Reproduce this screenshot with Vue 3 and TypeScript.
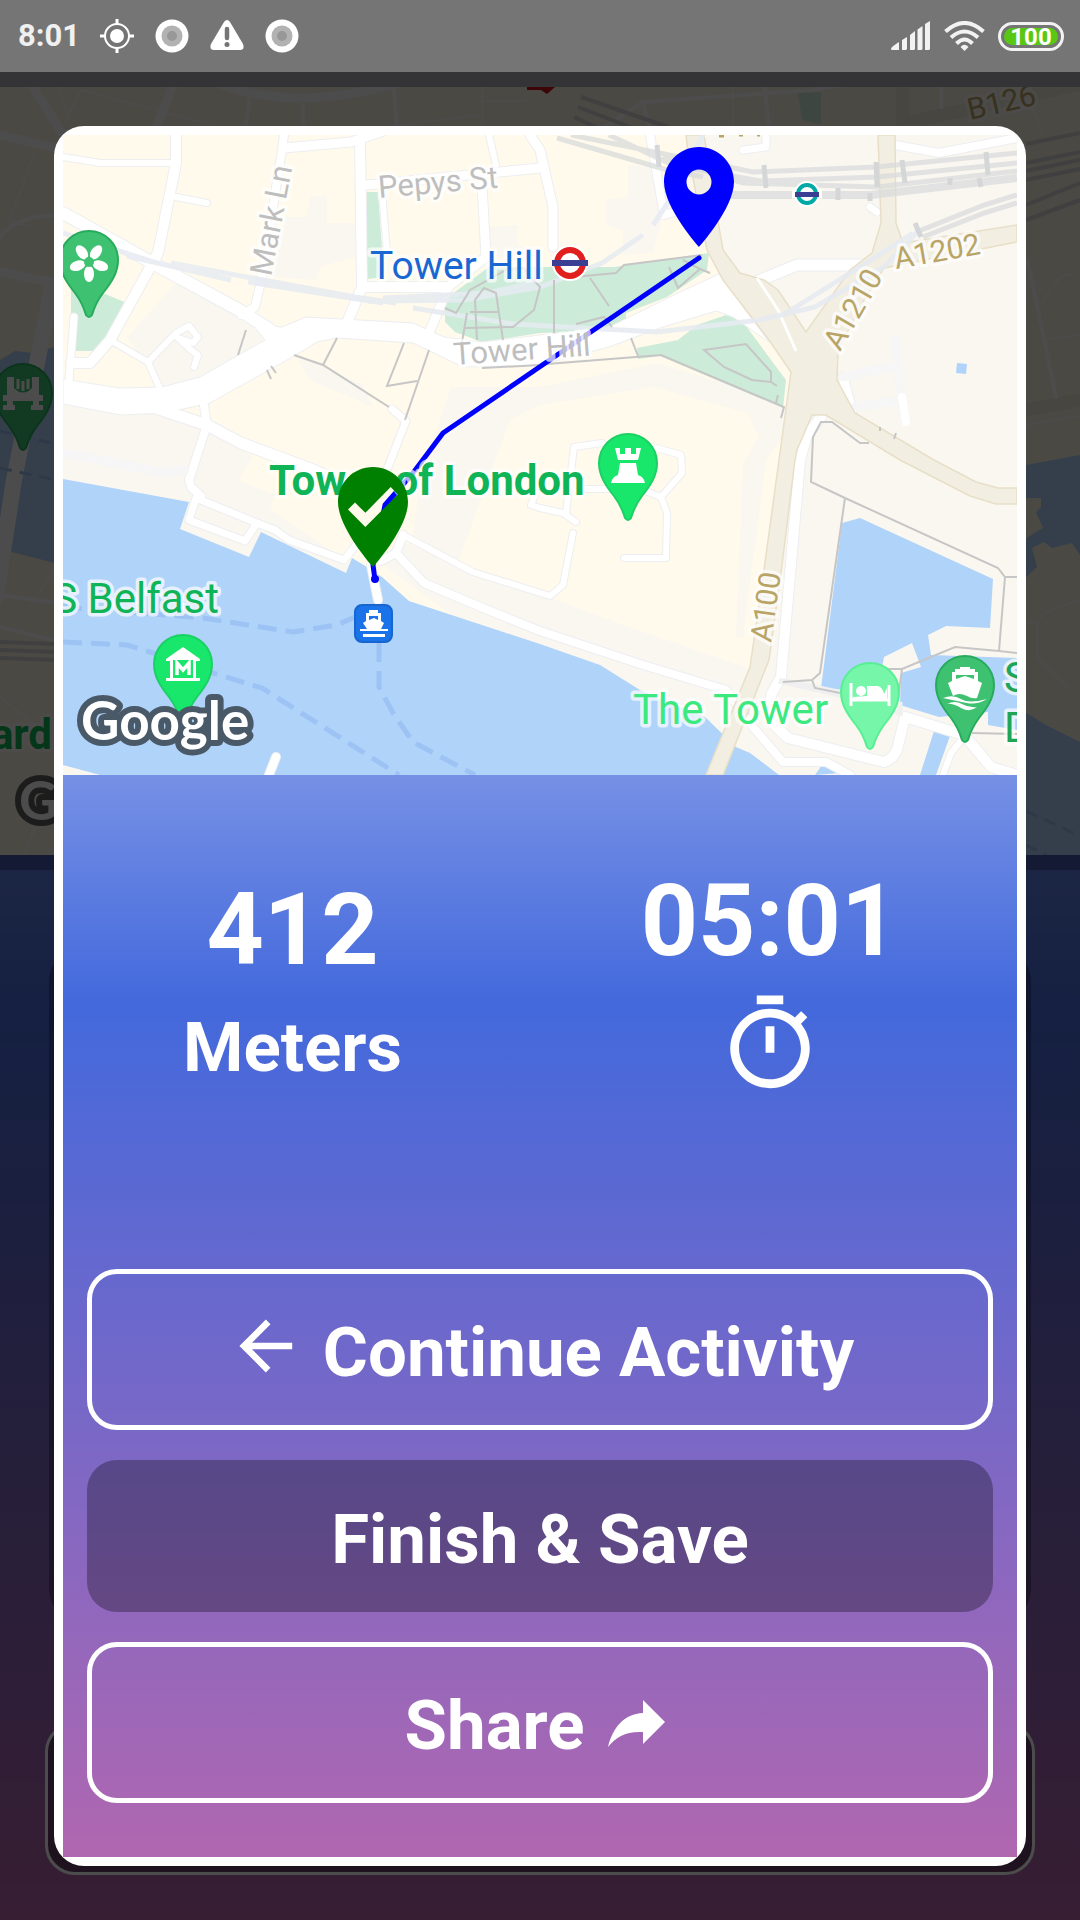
<script setup lang="ts">
import { ref } from 'vue'

interface PoiPin {
  id: string
  x: number
  y: number
  fill: string
  edge: string
}

const clock = ref('8:01')
const battery = ref(100)
const distance = ref(412)
const elapsed = ref('05:01')

const pinShape =
  'M-29 0A29 29 0 0 1 29 0C29 13 22 23 14 33C8 41 5 48 3 55Q0 59 -3 55C-5 48 -8 41 -14 33C-22 23 -29 13 -29 0Z'

const pins: PoiPin[] = [
  { id: 'garden', x: 26, y: 125, fill: '#3fc172', edge: '#27ac5d' },
  { id: 'castle', x: 565, y: 328, fill: '#19e76b', edge: '#1bd065' },
  { id: 'museum', x: 120, y: 529, fill: '#19e76b', edge: '#1bd065' },
  { id: 'hotel', x: 807, y: 557, fill: '#75f6a8', edge: '#58ef94' },
  { id: 'marina', x: 902, y: 550, fill: '#3fc172', edge: '#27ac5d' },
]

const footpaths: string[] = [
  'M183 195L175 220', 'M274 203L260 230', 'M231 220L260 230L326 272', 'M341 208L324 251L354 246',
  'M366 215L342 285', 'M204 235L208 244M208 231L213 238',
  'M382 173L393 178L407 155L443 135L460 133L477 152L471 175L450 192L402 193',
  'M414 205L412 165L421 153L433 158L440 205', 'M407 177L436 177', 'M399 207L404 178',
  'M511 142L553 138L561 130L639 120', 'M527 143L546 171', 'M491 145L491 198',
  'M606 132L615 153L637 134L620 125M637 134L647 138', 'M513 189L541 182L549 192',
  'M419 233L477 230L484 229L598 220L721 272L718 283', 'M568 203L575 221',
  'M641 215L683 209L708 237L708 247L689 245L661 232Z', 'M708 247L714 251M715 260L713 268',
  'M806 308L797 308L769 287L758 287L750 302L748 347L782 363L935 433L942 442H954',
  'M942 442L936 516', 'M782 363L757 538L749 545L720 547', 'M749 545L752 553L777 558',
  'M825 534H839L892 512L936 516L954 518', 'M839 534L836 556', 'M909 598L954 599',
  'M817 292V296M833 298L831 304',
]

const streets: { d: string; w: number }[] = [
  { d: 'M113 0V28L95 118L47 205L27 228H8', w: 10 },
  { d: 'M0 22L37 28H113', w: 6 },
  { d: 'M113 62L144 68', w: 6 },
  { d: 'M0 78L95 131L178 176L215 200', w: 12 },
  { d: 'M221 0L219 15L199 142L192 172L178 180', w: 8 },
  { d: 'M221 13L288 7L318 -3', w: 9 },
  { d: 'M297 5L299 152L283 190', w: 10 },
  { d: 'M299 152H385', w: 10 },
  { d: 'M299 50L304 50L477 33', w: 9 },
  { d: 'M419 50L423 122L385 152L366 198', w: 9 },
  { d: 'M319 57L324 118', w: 6 },
  { d: 'M426 0L433 30', w: 6 },
  { d: 'M467 0L477 15L490 72V112', w: 9 },
  { d: 'M587 0L601 80L615 76', w: 8 },
  { d: 'M47 205L85 227L97 254', w: 6 },
  { d: 'M85 227L113 198L126 191L135 202L130 208L115 203L128 215L135 220L131 232', w: 6 },
  { d: 'M11 182L6 246', w: 7 },
  { d: 'M140 264L144 290L126 345L128 352L138 361', w: 8 },
  { d: 'M90 272L144 290L178 308L250 335L280 348', w: 11 },
  { d: 'M329 274L343 286L320 345', w: 7 },
  { d: 'M133 363L126 385L182 406L194 388ZL194 388L212 395L226 405L281 425L297 405', w: 7 },
  { d: 'M340 400L410 437L487 461L500 450L510 398', w: 6 },
  { d: 'M308 430L315 465M318 426L333 418L340 400M333 418L361 448L420 473L477 496L580 530L663 555L690 592L720 627H763L787 640', w: 8 },
  { d: 'M503 378L511 312L539 308', w: 6 },
  { d: 'M590 312L618 320L619 338L598 362L604 378L603 423H561', w: 6 },
  { d: 'M522 354H560L580 355L598 362M477 373L500 378L513 387', w: 6 },
  { d: 'M477 348L468 370L477 373', w: 6 },
  { d: 'M758 282L744 300L737 325L718 542L708 560L706 585L725 603L821 627Q830 624 834 615L842 582L901 600L928 632L954 640', w: 10 },
  { d: 'M901 602L888 618L880 640', w: 6 },
  { d: 'M780 242L789 276', w: 9 },
  { d: 'M832 10L876 18L954 3', w: 8 },
  { d: 'M695 146L734 130H800', w: 11 },
  { d: 'M680 15L703 12V0', w: 7 },
  { d: 'M807 72L814 77', w: 7 },
  { d: 'M213 622L204 645', w: 8 },
]
</script>

<template>
  <div class="screen">
    <header class="status">
      <time class="clock">{{ clock }}</time>
      <div class="notices">
        <svg width="34" height="34" viewBox="0 0 34 34" aria-hidden="true">
          <g stroke="#fff" fill="none" stroke-width="2">
            <circle cx="17" cy="17" r="12" />
            <path d="M17 0V5M17 29V34M0 17H5M29 17H34" stroke-width="3" />
          </g>
          <circle cx="17" cy="17" r="7" fill="#fff" />
        </svg>
        <svg width="34" height="34" viewBox="0 0 34 34" aria-hidden="true">
          <circle cx="17" cy="17" r="16.500" fill="#fff" />
          <circle cx="17" cy="17" r="10.500" fill="#b2b2b2" />
          <circle cx="17" cy="17" r="5" fill="#989898" />
        </svg>
        <svg width="34" height="34" viewBox="0 0 34 34" aria-hidden="true">
          <path d="M14 3Q17 -1 20 3L33 25Q35 31 30 31H4Q-1 31 1 25Z" fill="#fff" />
          <path d="M17 10V19" stroke="#757575" stroke-width="4.500" stroke-linecap="round" />
          <circle cx="17" cy="25.500" r="2.500" fill="#757575" />
        </svg>
        <svg width="34" height="34" viewBox="0 0 34 34" aria-hidden="true">
          <circle cx="17" cy="17" r="16.500" fill="#fff" />
          <circle cx="17" cy="17" r="10.500" fill="#b2b2b2" />
          <circle cx="17" cy="17" r="5" fill="#989898" />
        </svg>
      </div>
      <div class="system">
        <svg width="40" height="30" viewBox="0 0 40 30" fill="#f2f2f2" aria-hidden="true">
          <path d="M0 28Q0 26 8 21V29H1Q0 29 0 28ZM11 19L16 16V28L15 29H11ZM19 14L24 10V28L23 29H19ZM26.500 8.500L31.500 5V28L30.500 29H26.500ZM34 3L39 0V28L38 29H34Z" />
        </svg>
        <svg width="41" height="30" viewBox="0 0 41 30" fill="none" stroke="#f2f2f2" stroke-width="4" aria-hidden="true">
          <path d="M1.500 10.500Q20.500 -6.500 39.500 10.500" />
          <path d="M7 16.500Q20.500 4.500 34 16.500" />
          <path d="M12.500 22.500Q20.500 14.500 28.500 22.500" />
          <path d="M16.500 26Q20.500 21.500 24.500 26L20.500 30Z" fill="#f2f2f2" stroke="none" />
        </svg>
        <div class="battery"><span class="charge">{{ battery }}</span></div>
      </div>
    </header>

    <div class="stage">
      <div class="tracker" aria-hidden="true">
        <div class="tracker-bar"></div>
        <svg class="tracker-map" viewBox="0 0 1080 768" preserveAspectRatio="xMidYMid slice">
          <rect width="1080" height="768" fill="#f9f3e4" />
          <path d="M0 273L15 264L34 266L54 260L70 480L12 465L0 460ZM1026 378L1080 368V768H1020Z" fill="#b0d3fa" />
          <path d="M1020 411H1041V420L1036 425L1043 441L1020 455ZM1032 461L1044 455L1052 461L1072 456L1080 468V655L1046 638L1020 622V496L1037 480Z" fill="#f9f3e4" />
          <path d="M798 6L821 5V37L802 33Z" fill="#cdebd9" />
          <path d="M903 0V45M906 36L1080 -3M1020 324L1080 313" stroke="#f0ead8" stroke-width="13" fill="none" />
          <g fill="none" stroke="#fff" stroke-linecap="round">
            <path d="M33 0L62 46M172 0L155 45M220 -3Q293 25 396 -3M0 48L56 61M0 185L56 196" stroke-width="9" />
            <path d="M52 200L14 393L-4 510" stroke-width="16" />
            <path d="M250 10L245 42M303 18V42M394 3L397 42M602 42L643 15L812 3L850 -3M643 15L650 42M765 0L769 42M941 0V20M0 150Q14 130 56 128M1027 173Q1040 230 1056 310M0 508L56 516M0 540L56 554" stroke-width="4" />
            <path d="M81 3L155 23L213 38M81 3L65 35M58 0L68 28M400 38L479 28M482 0V42M482 14H525M733 0V42M1032 20L1043 46M34 66L10 133L30 140M30 520L56 480M0 610L56 655M24 768L42 725M1050 120L1060 105M1042 215L1060 190L1072 187M1047 252L1080 248M1026 338L1080 329M1026 536L1037 535L1045 525L1080 513M1037 535V570L1068 600" stroke-width="2" opacity=".7" />
          </g>
          <g fill="none" stroke="#d4d6d4" stroke-width="4">
            <path d="M581 10L674 42M578 20L635 42M574 30L599 42M0 555L56 557M0 563L56 565M0 571L56 573M1026 57L1080 46M1026 76L1080 65M1026 84L1080 73M1026 93L1080 82M1026 118L1080 96M1026 133L1080 113" />
          </g>
          <path d="M527 0H555L547 7L541 3H527Z" fill="#c8141f" />
          <path d="M0 381L56 393M0 344L56 357M1026 724L1080 749M1026 758L1046 768" stroke="#96bff2" stroke-width="3" stroke-dasharray="12 8" />
          <g transform="translate(23 306)">
            <path :d="pinShape" fill="#3fc172" stroke="#27ac5d" stroke-width="2" />
            <path d="M-16 -16H-9V-5Q0 4 9 -5V-16H16V2H20V8H16V12H20V17H8V12H10V8H-10V12H-8V17H-20V12H-16V8H-20V2H-16Z" fill="#fff" />
            <path d="M-5 -14V-4M0 -12V-2M5 -14V-4" stroke="#fff" stroke-width="3" />
          </g>
          <text class="halo road" transform="translate(970 33) rotate(-13)">B126</text>
          <text class="halo green strong" x="52" y="662" text-anchor="end">ard</text>
          <text class="brand brand--dim" x="19" y="733">G</text>
        </svg>
        <div class="tracker-panel">
          <div class="tracker-card"></div>
          <div class="tracker-action"></div>
        </div>
      </div>

      <div class="scrim">
        <section class="dialog" role="dialog" aria-label="Activity summary">
          <svg class="map" viewBox="0 0 954 640" preserveAspectRatio="xMidYMid slice" role="img" aria-label="Route map">
            <rect width="954" height="640" fill="#faf7f0" />
            <path d="M0 0H640L660 140L728 240L700 435L680 640H600L477 560L100 300L0 260Z" fill="#fffaeb" />
            <g fill="#faf7f0">
              <path d="M113 148L64 202L85 232L99 256L150 240L215 203Z" />
              <path d="M247 62L264 60V88H292V122L257 132L254 145L209 142L223 82H243Z" />
              <path d="M0 262L144 284L190 322L175 345L212 360L200 400L280 440L0 380Z" />
              <path d="M388 252H477L594 228L684 255L722 272V300L703 325L680 502H673L680 328L696 302L684 278L591 252L477 270L447 285L395 428L350 400L357 345Z" />
              <path d="M320 430L343 408L560 490L690 535V640L500 560Z" />
              <path d="M627 35L640 45L600 80L590 118L560 120V95L543 90V65L565 62V30Z" />
              <path d="M233 220L300 250L310 272L247 245Z" />
              <path d="M426 92L455 90V110L477 115V125L426 122Z" />
            </g>
            <path d="M0 344L126 367L117 394L186 422L198 397L283 438L289 423L304 432L319 442L346 466L477 509L537 530L577 555L642 582L673 612L687 618L716 640H37L0 630Z" fill="#b0d3fa" />
            <path d="M797 383L930 444L927 493L883 491L865 500L868 520L954 523V595L925 590V577L876 582L837 570L838 538L858 532L849 508L821 522L814 558L758 553L779 388ZM871 596L887 601L873 640H857ZM759 630L777 638L752 640ZM894 228L904 229L903 239L893 238Z" fill="#b0d3fa" />
            <path d="M8 145L64 168L47 202L33 216H12V185H8ZM304 57H315L321 142L304 144ZM382 175L385 162L426 132H551L646 118L644 135L604 162L563 178V188L522 197L477 198L419 207L392 197L382 187ZM574 213L615 205L634 190L663 180L680 187L723 245L720 273L597 221L575 224Z" fill="#cdebd9" />

            <g fill="none" stroke="#edeef1" stroke-linejoin="round" stroke-linecap="round">
              <path v-for="s in streets" :key="'e' + s.d" :d="s.d" :stroke-width="s.w + 2" />
            </g>
            <path d="M0 244L56 253L99 252L137 242L202 205L190 190L219 192L243 182L350 188L381 202L419 207L477 200L546 192L615 158L656 139L706 207L670 182L653 176L597 193L546 212L477 230L400 232L350 208L274 203L254 207L233 220L147 268L102 278L58 280L0 269Z" fill="#fff" stroke="#edeef1" />
            <g fill="none" stroke="#fff" stroke-linejoin="round" stroke-linecap="round">
              <path v-for="s in streets" :key="s.d" :d="s.d" :stroke-width="s.w" />
            </g>
            <path d="M780 242L835 230M833 205L837 262L843 287M792 272L839 265M0 318L102 338L122 335" fill="none" stroke="#f6f6f7" stroke-width="9" stroke-linecap="round" />
            <path d="M839 262L843 287" stroke="#fff" stroke-width="8" stroke-linecap="round" />
            <path d="M716 546L777 560L837 578V569L780 558L722 546Z" fill="#f0f0f1" stroke="#f0f0f1" stroke-width="5" />

            <path d="M623 0H641L656 92L660 115L677 138L701 145L715 155L743 197L787 135L809 118L818 88L815 0H832L833 88L840 108L954 90V107L821 133L801 165L775 215L774 245L792 278L871 325L913 347L935 353H954V369H933L907 361L837 325L763 280H749L734 315L732 325L718 438L706 525L660 640H643L687 532L701 435L716 325L728 237L706 205L660 145L644 115L625 18Z" fill="#f2eee1" stroke="#e8dfc8" stroke-width="1.500" />
            <path d="M694 143L715 175L733 216" fill="none" stroke="#fff" stroke-width="3" />

            <g fill="none" stroke="#e6ebf2" stroke-width="5" opacity=".85">
              <path d="M0 98L50 114L94 128M64 121L168 145M108 128L292 162L333 168M185 147L320 168M350 173L450 189L594 197L697 185L752 172L821 132L856 95" />
              <path d="M305 166L402 165L477 152L539 128L580 100M590 90L610 60L640 0M320 163L425 158L477 146M720 180L800 130L850 98" />
            </g>
            <g fill="none" stroke="#d9dcdc" stroke-width="5" opacity=".75">
              <path d="M508 0L690 37L813 32L954 18M494 3L601 34L640 42M546 0L610 30L697 46L814 42L954 28M600 22L680 48L814 52L954 36M856 96L921 70L954 60M860 102L921 78L954 68" />
              <path d="M663 60H808L954 43" stroke-width="8" />
              <path d="M701 30L703 53M813 27L814 52M839 25L842 48M923 17L925 40M594 10L596 32M775 53V65M807 58V66M887 43V50M852 88L858 102M916 43L918 52" stroke="#c9ccd0" />
            </g>
            <path v-for="p in footpaths" :key="p" :d="p" fill="none" stroke="#c6c6c6" stroke-width="2" />
            <path d="M0 507L64 510L90 518L150 538L199 553L336 640M0 472L140 483L230 497L274 490L292 482M316 508V552L330 578L350 607L412 640" fill="none" stroke="#9cc3f4" stroke-width="5" stroke-dasharray="19 9" />

            <path d="M636 123L380 298L350 338L322 370L310 430L312 445" fill="none" stroke="#00f" stroke-width="5" stroke-linejoin="round" stroke-linecap="round" />
            <circle cx="312" cy="444" r="4" fill="#00f" />

            <g class="halo">
              <text class="road street" transform="translate(316 63) rotate(-5)">Pepys St</text>
              <text class="road street" transform="translate(208 142) rotate(-79)">Mark Ln</text>
              <text class="road street" transform="translate(391 230) rotate(-4)">Tower Hill</text>
              <text class="road" transform="translate(833 134) rotate(-10)">A1202</text>
              <text class="road" transform="translate(777 217) rotate(-60)">A1210</text>
              <text class="road" transform="translate(708 508) rotate(-82)">A100</text>
              <text class="transit" x="307" y="144">Tower Hill</text>
              <text class="green strong" x="206" y="360">Tower of London</text>
              <text class="green" x="156" y="478" text-anchor="end">S Belfast</text>
              <text class="green mint" x="570" y="589">The Tower</text>
              <text class="green deep" x="941" y="557">S</text>
              <text class="green deep" x="941" y="607">D</text>
            </g>
            <path d="M656 1H661M676 0H680M694 0H697" stroke="#b8a566" stroke-width="3" />

            <circle cx="507" cy="128" r="18" fill="#fff" />
            <circle cx="507" cy="128" r="13" fill="#fff" stroke="#e21f1f" stroke-width="6" />
            <rect x="489" y="125" width="36" height="6" fill="#3b3f94" />
            <circle cx="744" cy="59" r="13" fill="#fff" />
            <path d="M729 59H759" stroke="#fff" stroke-width="9" />
            <circle cx="744" cy="59" r="9" fill="#fff" stroke="#00a9a5" stroke-width="4" />
            <rect x="732" y="57" width="24" height="5" fill="#3b3f94" />

            <path v-for="p in pins" :key="p.id" :d="pinShape" :transform="`translate(${p.x} ${p.y})`" :fill="p.fill" :stroke="p.edge" stroke-width="2" />
            <g transform="translate(26 127)" fill="#fff">
              <ellipse v-for="a in [36, 108, 180, 252, 324]" :key="a" cx="0" cy="-12" rx="5" ry="8" :transform="`rotate(${a})`" />
              <circle r="5" fill="#3fc172" />
            </g>
            <path transform="translate(565 328)" d="M-13 -15H-8V-9H-3V-15H3V-9H8V-15H13L10 -3H-10ZM-8 0H8L10 12Q16 14 17 20H-17Q-16 14 -10 12Z" fill="#fff" />
            <g transform="translate(120 529)" fill="#fff">
              <path d="M0 -17L17 -5V-3H13V14H17V17H-17V14H-13V-3H-17V-5ZM-10 -4V14H10V-4Z" fill-rule="evenodd" />
              <path d="M-6 11V-1L0 6L6 -1V11" fill="none" stroke="#fff" stroke-width="3.500" />
            </g>
            <g transform="translate(807 557)">
              <path d="M-19 -9V14M19 -7V14M-19 8H19" stroke="#fff" stroke-width="3" />
              <circle cx="-9" cy="-1" r="5" fill="#fff" />
              <path d="M-3 4V-6H7Q12 -6 14 2L17 -4V8H-17V5Z" fill="#fff" />
            </g>
            <g transform="translate(902 550)" fill="#fff">
              <path d="M-5 -18H5V-16H10V-13H13V-4L17 -2L12 13Q7 14 2 11Q-6 7 -12 11L-17 -2L-13 -4V-13H-10V-16H-5ZM-9 -10V-6L0 -9L9 -6V-10Z" fill-rule="evenodd" />
              <path d="M-22 13Q-12 9 -4 14T22 14Q12 20 2 18T-22 13ZM-18 19Q-10 15 -3 19T12 22Q5 28 -4 23T-18 19Z" />
            </g>
            <rect x="292" y="470" width="37" height="37" rx="7" fill="#1a73e8" stroke="#1765cf" stroke-width="2" />
            <path d="M306 475H315V478H318V486L321 488L318 494H325V496H297V494H304L300 488L303 486V478H306ZM306 481V485L311 483L315 485V481ZM300 499H322V502H300Z" fill="#fff" fill-rule="evenodd" />

            <text class="brand" x="18" y="605">Google</text>

            <path transform="translate(576 2) scale(5)" fill="#00f" fill-rule="evenodd" d="M12 2C8.130 2 5 5.130 5 9c0 5.250 7 13 7 13s7-7.750 7-13c0-3.870-3.130-7-7-7zm0 9.500a2.500 2.500 0 1 1 0-5 2.500 2.500 0 0 1 0 5z" />
            <path transform="translate(250 322) scale(5)" fill="green" fill-rule="evenodd" d="M12 2C8.130 2 5 5.130 5 9c0 5.250 7 13 7 13s7-7.750 7-13c0-3.870-3.130-7-7-7zM10.470 14L7 10.500l1.400-1.410 2.070 2.080L15.540 6l1.410 1.500z" />
          </svg>

          <div class="summary">
            <div class="stats">
              <div class="stat">
                <strong class="value">{{ distance }}</strong>
                <span class="unit">Meters</span>
              </div>
              <div class="stat stat--time">
                <strong class="value">{{ elapsed }}</strong>
                <svg width="106" height="106" viewBox="0 0 24 24" fill="#fff" role="img" aria-label="Elapsed time">
                  <path d="M15 1H9v2h6V1zm-4 13h2V8h-2v6zm8.030-6.610l1.420-1.420c-.430-.510-.900-.990-1.410-1.410l-1.420 1.420C16.070 4.740 14.120 4 12 4c-4.970 0-9 4.030-9 9s4.020 9 9 9 9-4.030 9-9c0-2.120-.740-4.070-1.970-5.610zM12 20c-3.870 0-7-3.130-7-7s3.130-7 7-7 7 3.130 7 7-3.130 7-7 7z" />
                </svg>
              </div>
            </div>

            <div class="actions">
              <button type="button" class="action action--outline">
                <svg class="back" width="73" height="66" viewBox="0 2 22 20" fill="#fff" aria-hidden="true">
                  <path d="M20 11H7.830l5.590-5.590L12 4l-8 8 8 8 1.410-1.410L7.830 13H20v-2z" />
                </svg>
                Continue Activity
              </button>
              <button type="button" class="action action--solid">Finish &amp; Save</button>
              <button type="button" class="action action--outline">
                Share
                <svg class="forward" width="67" height="47" viewBox="0 0 67 47" fill="#fff" aria-hidden="true">
                  <path d="M0 47C5 27 16 14 35 13V0L57 22L35 44V32C18 31 8 37 0 47Z" />
                </svg>
              </button>
            </div>
          </div>
        </section>
      </div>
    </div>
  </div>
</template>

<style>
body {
  margin: 0;
}
</style>

<style scoped>
.screen {
  min-height: 100vh;
  display: flex;
  flex-direction: column;
  font-family: Roboto, "Liberation Sans", sans-serif;
}

svg {
  display: block;
  flex: none;
}

.status {
  height: 72px;
  box-sizing: border-box;
  padding: 0 16px 0 18px;
  display: flex;
  align-items: center;
  background: #757575;
}

.clock {
  font-size: 31px;
  font-weight: 700;
  line-height: 40px;
  color: #f0f0f0;
}

.notices {
  display: flex;
  gap: 21px;
  margin-left: 20px;
}

.system {
  display: flex;
  align-items: center;
  gap: 13px;
  margin-left: auto;
}

.battery {
  box-sizing: border-box;
  width: 66px;
  padding: 3px;
  border: 3px solid #f2f2f2;
  border-radius: 15px;
}

.charge {
  display: block;
  height: 17px;
  line-height: 18px;
  border-radius: 9px;
  background: #58c814;
  color: #fff;
  font-size: 24px;
  font-weight: 700;
  text-align: center;
}

.stage {
  flex: 1;
  display: grid;
  grid-template-columns: minmax(0, 1fr);
}

.tracker,
.scrim {
  grid-area: 1 / 1;
}

.tracker {
  display: flex;
  flex-direction: column;
  background: #adadb4;
}

.tracker-bar {
  height: 15px;
}

.tracker-map {
  width: 100%;
  height: 768px;
}

.tracker-panel {
  flex: 1;
  display: flex;
  flex-direction: column;
  gap: 102px;
  padding: 80px 45px 45px;
  border-top: 15px solid #4357aa;
  background: linear-gradient(#5e80e4, #466bdc 14%, #b866ac);
}

.tracker-card {
  flex: 1;
  margin: 0 4px;
  border-radius: 30px;
  background: rgba(0, 0, 0, 0.3);
}

.tracker-action {
  height: 147px;
  border: 3px solid #fff;
  border-radius: 30px;
  background: rgba(0, 0, 0, 0.4);
}

.scrim {
  display: flex;
  padding: 54px;
  background: rgba(0, 0, 0, 0.7);
}

.dialog {
  flex: 1;
  min-width: 0;
  display: flex;
  flex-direction: column;
  padding: 9px;
  border-radius: 30px;
  background: #fff;
  overflow: hidden;
}

.map {
  width: 100%;
  height: 640px;
}

.halo {
  stroke: rgba(255, 255, 255, 0.7);
  stroke-width: 7px;
  stroke-linejoin: round;
  paint-order: stroke;
}

.road {
  font-size: 30px;
  fill: #b8a566;
}

.street {
  font-size: 31px;
  fill: #bebebe;
}

.transit {
  font-size: 39px;
  fill: #1967d2;
}

.green {
  font-size: 42px;
  fill: #0fb457;
}

.strong {
  font-weight: 700;
}

.mint {
  fill: #3ce97f;
}

.deep {
  fill: #1fa558;
}

.brand {
  font-family: Lato, Roboto, sans-serif;
  font-size: 53px;
  font-weight: 700;
  fill: #fff;
  stroke: #4a5968;
  stroke-width: 12px;
  stroke-linejoin: round;
  paint-order: stroke;
}

.brand--dim {
  stroke: #606060;
}

.summary {
  flex: 1;
  display: flex;
  flex-direction: column;
  gap: 84px;
  padding: 0 24px 54px;
  background: linear-gradient(#7690e5, #4369dc 21%, #b067b0);
}

.stats {
  flex: 1;
  display: grid;
  grid-template-columns: 1fr 1fr;
  align-items: center;
  margin: 0 -15px 0 -33px;
  color: #fff;
}

.stat {
  display: flex;
  flex-direction: column;
  align-items: center;
  gap: 20px;
}

.stat--time {
  gap: 12px;
}

.value {
  font-size: 100px;
  line-height: 116px;
}

.unit {
  font-size: 69px;
  font-weight: 700;
  line-height: 80px;
}

.actions {
  display: flex;
  flex-direction: column;
  gap: 30px;
}

.action {
  display: flex;
  align-items: center;
  justify-content: center;
  gap: 24px;
  margin: 0;
  padding: 40px 0 32px;
  border: 0;
  border-radius: 30px;
  background: transparent;
  color: #fff;
  font-family: inherit;
  font-size: 69px;
  font-weight: 700;
  line-height: 80px;
}

.action--outline {
  padding: 39px 0 32px;
  border: 5px solid #fff;
}

.action--solid {
  background: rgba(0, 0, 0, 0.3);
}

.back {
  margin-bottom: 14px;
}

.forward {
  margin-bottom: 6px;
}
</style>
